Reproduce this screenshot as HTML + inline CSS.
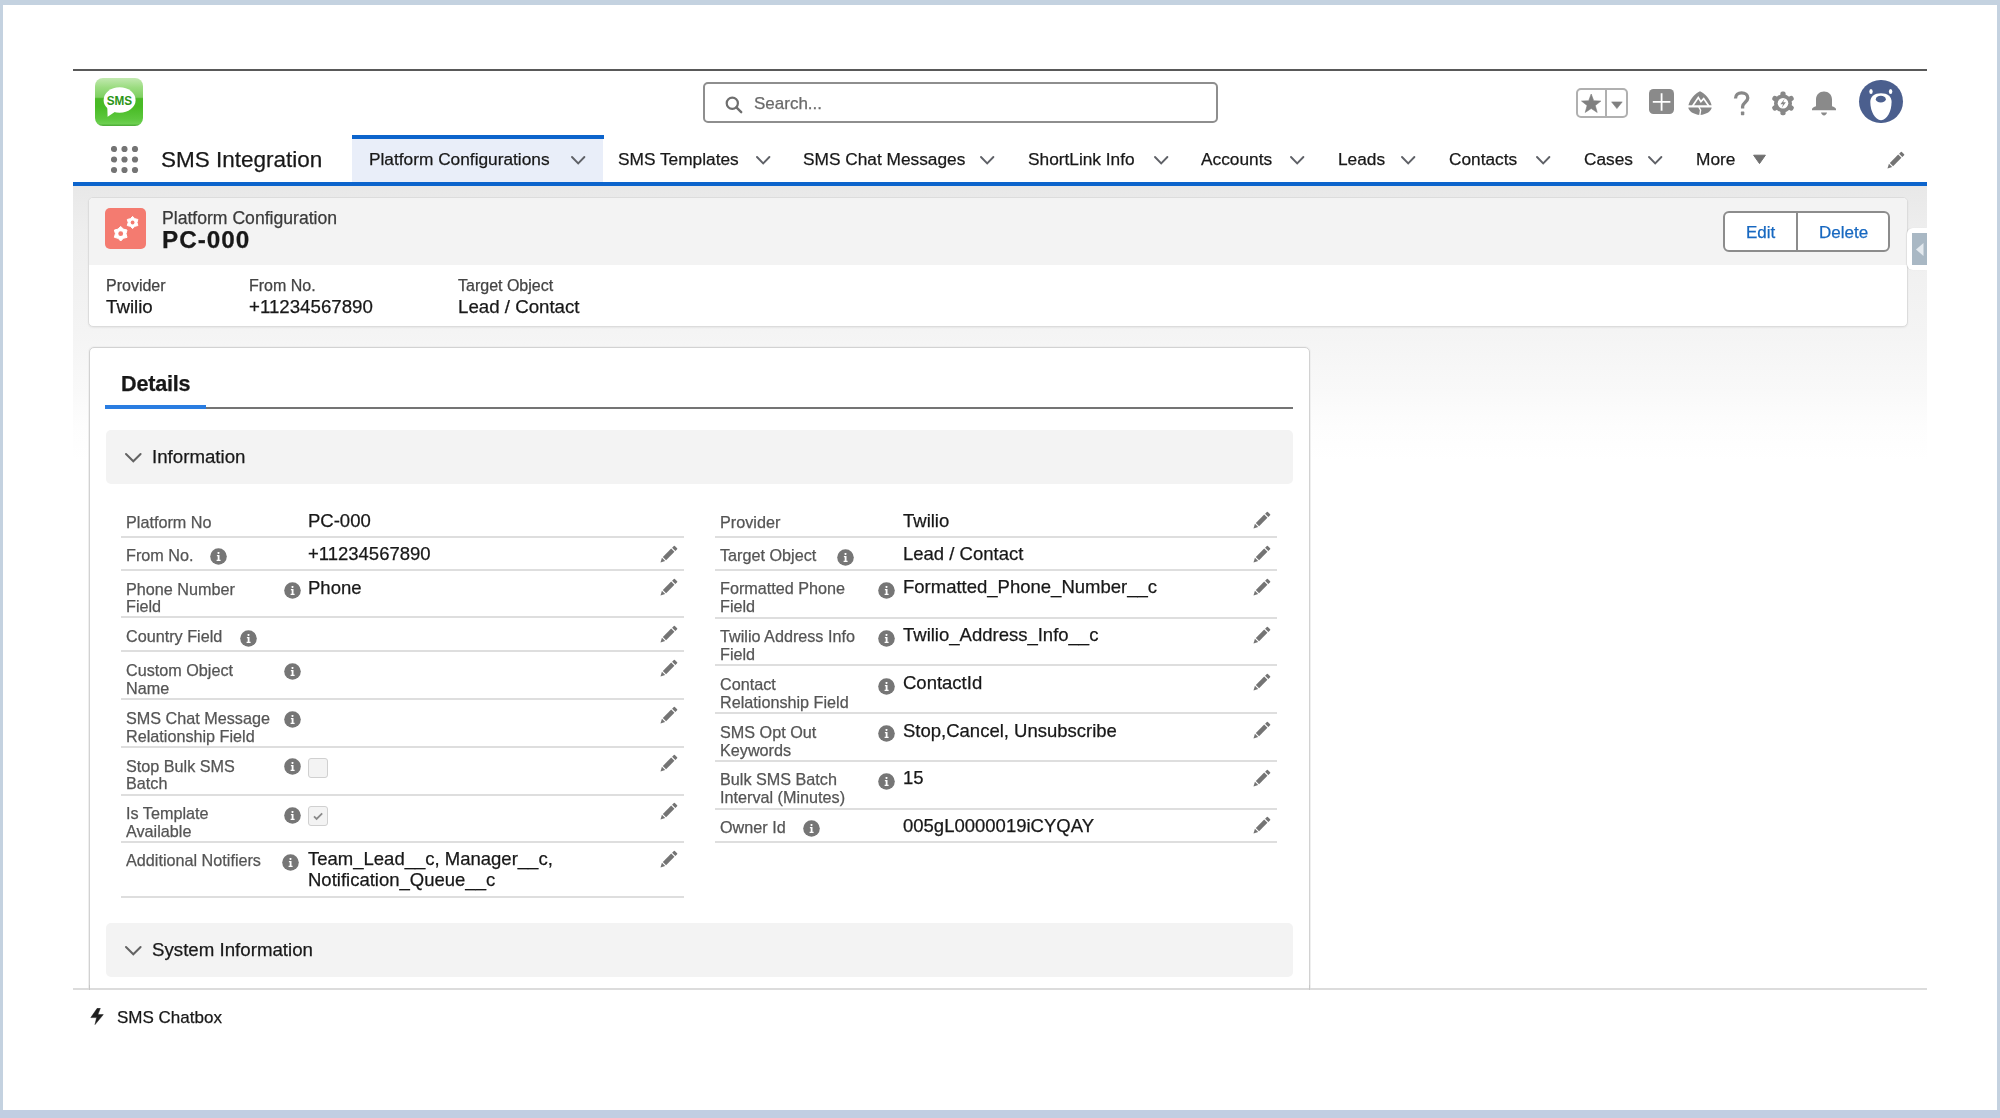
<!DOCTYPE html><html><head><meta charset="utf-8"><style>
html,body{margin:0;padding:0;}
body{width:2000px;height:1118px;position:relative;overflow:hidden;background:#c4d2e0;font-family:"Liberation Sans", sans-serif;}
.t{position:absolute;white-space:nowrap;line-height:1;-webkit-text-stroke:0.25px currentColor;will-change:transform;}
.info,.pen{position:absolute;line-height:0;}
.sep{position:absolute;height:2px;background:#dedede;}
.abs{position:absolute;box-sizing:border-box;}
</style></head><body>
<div class="abs" style="left:0;top:1110px;width:2000px;height:8px;background:#c1cee2;"></div>
<div class="abs" style="left:3px;top:5px;width:1994px;height:1105px;background:#fff;"></div>
<div class="abs" style="left:73px;top:186px;width:1854px;height:804px;background:linear-gradient(to bottom,#e8e8e8 0px,#eeeeee 45px,#f4f4f4 145px,#f9f9f9 205px,#fdfdfd 240px,#fff 275px);"></div>
<div class="abs" style="left:73px;top:69px;width:1854px;height:2px;background:#595959;"></div>
<div class="abs" style="left:73px;top:182px;width:1854px;height:4px;background:#0c64cc;"></div>

<div class="abs" style="left:95px;top:78px;width:48px;height:48px;border-radius:8px;background:linear-gradient(to bottom,#c2e9b0 0%,#9bdc80 20%,#7fd062 40%,#4ab927 43%,#48bb25 60%,#5cc73d 85%,#6ccf50 95%,#4aa836 100%);overflow:hidden;">
<svg width="48" height="48" viewBox="0 0 48 48" style="position:absolute;left:0;top:0;display:block"><ellipse cx="24.6" cy="22" rx="16" ry="12.7" fill="#fff"/><path d="M12.3 29.5L12.6 38.8L20.5 33.6z" fill="#fff"/><text x="24.4" y="26.8" text-anchor="middle" font-family="Liberation Sans" font-weight="700" font-size="12.6" textLength="25.5" lengthAdjust="spacingAndGlyphs" fill="#2b9516">SMS</text></svg></div>
<div class="abs" style="left:703px;top:82px;width:515px;height:41px;border:2px solid #8e8e8e;border-radius:5px;"></div>
<div class="abs" style="left:725px;top:96px;line-height:0"><svg width="18" height="18" viewBox="0 0 18 18"><circle cx="7.3" cy="7.3" r="5.6" fill="none" stroke="#6e6e6e" stroke-width="2.2"/><path d="M11.4 11.4L16.2 16.2" stroke="#6e6e6e" stroke-width="2.4" stroke-linecap="round"/></svg></div>
<div class="t" style="left:754.0px;top:95.2px;font-size:17px;color:#6a6a6a;font-weight:400;">Search...</div>
<div class="abs" style="left:1576px;top:88px;width:52px;height:30px;border:2px solid #b0b0b0;border-radius:5px;"></div>
<div class="abs" style="left:1605px;top:88px;width:2px;height:30px;background:#b0b0b0;"></div>
<div class="abs" style="left:1575.6px;top:87.5px;line-height:0"><svg width="53" height="31" viewBox="0 0 53 31" style="display:block"><path d="M15.20 6.00 L17.73 12.72 L24.90 13.05 L19.29 17.53 L21.20 24.45 L15.20 20.50 L9.20 24.45 L11.11 17.53 L5.50 13.05 L12.67 12.72z" fill="#808080" stroke="#808080" stroke-width="0.6" stroke-linejoin="round"/><path d="M35.6 13.9h10.6L40.9 20.6z" fill="#808080" stroke="#808080" stroke-width="0.6" stroke-linejoin="round"/></svg></div>
<div class="abs" style="left:1649.1px;top:88.6px;width:25.2px;height:25.9px;border-radius:4.5px;background:#8a8a8a;"><svg width="25.2" height="25.9" viewBox="0 0 25.2 25.9" style="position:absolute;left:0;top:0;display:block"><path d="M12.6 4.2v17.6M3.8 12.95h17.6" stroke="#fff" stroke-width="1.8"/></svg></div>
<div class="abs" style="left:1688px;top:90.5px;line-height:0"><svg width="24" height="25" viewBox="0 0 24 25" style="display:block"><path d="M12 0.3C17 2.5 22 8 23.6 14.3H0.4C2 8 7 2.5 12 0.3z" fill="#888"/><path d="M4.4 15.2L10.3 6.6L12.9 10.6L15.7 7.6L21 15.2" stroke="#fff" stroke-width="1.7" fill="none" stroke-linejoin="miter"/><path d="M0.3 16.5H23.7C23.5 20 18.5 23.5 12 24C5.5 23.5 0.5 20 0.3 16.5z" fill="#888"/><path d="M10.8 16L12.6 19.2L11.8 24.5" stroke="#fff" stroke-width="1.4" fill="none"/></svg></div>
<div class="abs" style="left:1733px;top:90.5px;line-height:0"><svg width="18" height="25" viewBox="0 0 18 25" style="display:block"><path d="M2.5 7.6C2.5 3.6 5.2 1.9 8.6 1.9C12.2 1.9 14.8 4 14.8 7C14.8 10.8 9.6 11.6 9.6 15.6V17.6" fill="none" stroke="#888" stroke-width="3.3"/><rect x="7.9" y="20.6" width="3.4" height="3.6" rx="0.6" fill="#888"/></svg></div>
<div class="abs" style="left:1771px;top:91px;line-height:0"><svg width="24" height="25" viewBox="0 0 24 25" style="display:block"><g fill="#888"><circle cx="12" cy="12.3" r="9"/><rect x="9.4" y="0.4" width="5.2" height="6" rx="2" transform="rotate(0 12 12.3)"/><rect x="9.4" y="0.4" width="5.2" height="6" rx="2" transform="rotate(60 12 12.3)"/><rect x="9.4" y="0.4" width="5.2" height="6" rx="2" transform="rotate(120 12 12.3)"/><rect x="9.4" y="0.4" width="5.2" height="6" rx="2" transform="rotate(180 12 12.3)"/><rect x="9.4" y="0.4" width="5.2" height="6" rx="2" transform="rotate(240 12 12.3)"/><rect x="9.4" y="0.4" width="5.2" height="6" rx="2" transform="rotate(300 12 12.3)"/></g><circle cx="12" cy="12.3" r="5.3" fill="#fff"/><path d="M13.6 7.8L9.4 13.3H12.1L10.6 16.9L14.9 11.3H12.2z" fill="#888"/></svg></div>
<div class="abs" style="left:1812px;top:90.5px;line-height:0"><svg width="24" height="25" viewBox="0 0 24 25" style="display:block"><path d="M4 15.3V8.5C4 3.5 7.5 0.4 12 0.4C16.5 0.4 20 3.5 20 8.5V15.3C22 15.8 24 17 24 18.2V19.2H0V18.2C0 17 2 15.8 4 15.3z" fill="#8a8a8a"/><path d="M9 21.4H15C14.5 23 13.5 24.4 12 24.4C10.5 24.4 9.5 23 9 21.4z" fill="#8a8a8a"/></svg></div>
<div class="abs" style="left:1859px;top:79.8px;width:43.5px;height:43.5px;border-radius:50%;background:#4b5f8e;overflow:hidden"><svg width="44" height="44" viewBox="0 0 44 44" style="position:absolute;left:0;top:0;display:block"><ellipse cx="12" cy="11.5" rx="1.7" ry="2.6" fill="#fff"/><ellipse cx="31.6" cy="11.5" rx="1.7" ry="2.6" fill="#fff"/><path d="M22 13.2C28.5 13.2 32.6 16.5 32.6 22C32.6 31 28 40.2 22 40.2C16 40.2 11.3 31 11.3 22C11.3 16.5 15.5 13.2 22 13.2z" fill="#fff"/><ellipse cx="21.8" cy="19.2" rx="5" ry="3.4" fill="#4b5f8e"/></svg></div>
<div class="abs" style="left:111px;top:146px;line-height:0"><svg width="28" height="28" viewBox="0 0 28 28"><circle cx="3.0" cy="3.0" r="3.1" fill="#747474"/><circle cx="3.0" cy="13.5" r="3.1" fill="#747474"/><circle cx="3.0" cy="24.0" r="3.1" fill="#747474"/><circle cx="13.5" cy="3.0" r="3.1" fill="#747474"/><circle cx="13.5" cy="13.5" r="3.1" fill="#747474"/><circle cx="13.5" cy="24.0" r="3.1" fill="#747474"/><circle cx="24.0" cy="3.0" r="3.1" fill="#747474"/><circle cx="24.0" cy="13.5" r="3.1" fill="#747474"/><circle cx="24.0" cy="24.0" r="3.1" fill="#747474"/></svg></div>
<div class="t" style="left:160.5px;top:148.9px;font-size:22.5px;color:#181818;font-weight:400;">SMS Integration</div>
<div class="abs" style="left:352px;top:135px;width:250.5px;height:47px;background:#e9eef9;"></div>
<div class="abs" style="left:352px;top:135px;width:252px;height:4px;background:#0c64cc;"></div>
<div class="t" style="left:368.5px;top:151.3px;font-size:17.3px;color:#181818;font-weight:400;">Platform Configurations</div>
<div class="abs" style="left:569.2px;top:154.2px;line-height:0"><svg width="18.4" height="12.4" viewBox="0 0 18.4 12.4" style="display:block"><path d="M3 3L9.20 9.40L15.40 3" fill="none" stroke="#5f6167" stroke-width="1.9" stroke-linecap="round" stroke-linejoin="miter"/></svg></div>
<div class="t" style="left:618.0px;top:151.3px;font-size:17.3px;color:#181818;font-weight:400;">SMS Templates</div>
<div class="abs" style="left:754.2px;top:154.2px;line-height:0"><svg width="18.4" height="12.4" viewBox="0 0 18.4 12.4" style="display:block"><path d="M3 3L9.20 9.40L15.40 3" fill="none" stroke="#5f6167" stroke-width="1.9" stroke-linecap="round" stroke-linejoin="miter"/></svg></div>
<div class="t" style="left:803.0px;top:151.3px;font-size:17.3px;color:#181818;font-weight:400;">SMS Chat Messages</div>
<div class="abs" style="left:978.2px;top:154.2px;line-height:0"><svg width="18.4" height="12.4" viewBox="0 0 18.4 12.4" style="display:block"><path d="M3 3L9.20 9.40L15.40 3" fill="none" stroke="#5f6167" stroke-width="1.9" stroke-linecap="round" stroke-linejoin="miter"/></svg></div>
<div class="t" style="left:1028.0px;top:151.3px;font-size:17.3px;color:#181818;font-weight:400;">ShortLink Info</div>
<div class="abs" style="left:1152.2px;top:154.2px;line-height:0"><svg width="18.4" height="12.4" viewBox="0 0 18.4 12.4" style="display:block"><path d="M3 3L9.20 9.40L15.40 3" fill="none" stroke="#5f6167" stroke-width="1.9" stroke-linecap="round" stroke-linejoin="miter"/></svg></div>
<div class="t" style="left:1201.0px;top:151.3px;font-size:17.3px;color:#181818;font-weight:400;">Accounts</div>
<div class="abs" style="left:1288.2px;top:154.2px;line-height:0"><svg width="18.4" height="12.4" viewBox="0 0 18.4 12.4" style="display:block"><path d="M3 3L9.20 9.40L15.40 3" fill="none" stroke="#5f6167" stroke-width="1.9" stroke-linecap="round" stroke-linejoin="miter"/></svg></div>
<div class="t" style="left:1338.0px;top:151.3px;font-size:17.3px;color:#181818;font-weight:400;">Leads</div>
<div class="abs" style="left:1399.2px;top:154.2px;line-height:0"><svg width="18.4" height="12.4" viewBox="0 0 18.4 12.4" style="display:block"><path d="M3 3L9.20 9.40L15.40 3" fill="none" stroke="#5f6167" stroke-width="1.9" stroke-linecap="round" stroke-linejoin="miter"/></svg></div>
<div class="t" style="left:1449.0px;top:151.3px;font-size:17.3px;color:#181818;font-weight:400;">Contacts</div>
<div class="abs" style="left:1534.2px;top:154.2px;line-height:0"><svg width="18.4" height="12.4" viewBox="0 0 18.4 12.4" style="display:block"><path d="M3 3L9.20 9.40L15.40 3" fill="none" stroke="#5f6167" stroke-width="1.9" stroke-linecap="round" stroke-linejoin="miter"/></svg></div>
<div class="t" style="left:1584.0px;top:151.3px;font-size:17.3px;color:#181818;font-weight:400;">Cases</div>
<div class="abs" style="left:1646.2px;top:154.2px;line-height:0"><svg width="18.4" height="12.4" viewBox="0 0 18.4 12.4" style="display:block"><path d="M3 3L9.20 9.40L15.40 3" fill="none" stroke="#5f6167" stroke-width="1.9" stroke-linecap="round" stroke-linejoin="miter"/></svg></div>
<div class="t" style="left:1696.0px;top:151.3px;font-size:17.3px;color:#181818;font-weight:400;">More</div>
<div class="abs" style="left:1752px;top:154px;line-height:0"><svg width="15" height="11" viewBox="0 0 15 11" style="display:block"><path d="M1.6 1.2h11.8L7.5 9.6z" fill="#6f6f6f" stroke="#6f6f6f" stroke-width="1" stroke-linejoin="round"/></svg></div>
<div class="pen" style="left:1887.0px;top:151.3px"><svg width="18" height="18" viewBox="0 0 18 18" style="display:block"><g transform="translate(0.5 17.5) rotate(-45)" fill="#747474"><path d="M0 0L4.3 -2.3V2.3z"/><rect x="5.6" y="-2.3" width="11.8" height="4.6"/><path d="M18.7 -2.3H21.2Q21.9 -2.3 21.9 -1.6V1.6Q21.9 2.3 21.2 2.3H18.7z"/></g></svg></div>
<div class="abs" style="left:88px;top:197px;width:1820px;height:130px;border:1px solid #dcdcdc;border-radius:5px;background:#fff;overflow:hidden;box-shadow:0 1px 2px rgba(0,0,0,0.06)"><div style="position:absolute;left:0;top:0;width:100%;height:67px;background:#f3f3f3"></div></div>
<div class="abs" style="left:105px;top:208px;width:41px;height:41px;border-radius:5px;background:#f47b70;line-height:0"><svg width="41" height="41" viewBox="0 0 41 41" style="display:block"><path d="M15.70 18.40 L18.35 21.11 L22.02 22.05 L21.00 25.70 L22.02 29.35 L18.35 30.29 L15.70 33.00 L13.05 30.29 L9.38 29.35 L10.40 25.70 L9.38 22.05 L13.05 21.11z" fill="#fff" stroke="#fff" stroke-width="1" stroke-linejoin="round"/><circle cx="15.7" cy="25.7" r="2.4" fill="#f47b70"/><path d="M27.60 8.40 L29.80 10.69 L32.88 11.45 L32.00 14.50 L32.88 17.55 L29.80 18.31 L27.60 20.60 L25.40 18.31 L22.32 17.55 L23.20 14.50 L22.32 11.45 L25.40 10.69z" fill="#fff" stroke="#fff" stroke-width="1" stroke-linejoin="round"/><circle cx="27.6" cy="14.5" r="1.9" fill="#f47b70"/></svg></div>
<div class="t" style="left:162.0px;top:209.6px;font-size:17.6px;color:#3a3a3a;font-weight:400;">Platform Configuration</div>
<div class="t" style="left:162.0px;top:228.2px;font-size:24.3px;color:#181818;font-weight:700;letter-spacing:1px;">PC-000</div>
<div class="t" style="left:105.5px;top:277.8px;font-size:16px;color:#444;font-weight:400;">Provider</div>
<div class="t" style="left:105.5px;top:297.9px;font-size:18.7px;color:#181818;font-weight:400;">Twilio</div>
<div class="t" style="left:248.5px;top:277.8px;font-size:16px;color:#444;font-weight:400;">From No.</div>
<div class="t" style="left:248.5px;top:297.9px;font-size:18.7px;color:#181818;font-weight:400;">+11234567890</div>
<div class="t" style="left:457.5px;top:277.8px;font-size:16px;color:#444;font-weight:400;">Target Object</div>
<div class="t" style="left:457.5px;top:297.9px;font-size:18.7px;color:#181818;font-weight:400;">Lead / Contact</div>
<div class="abs" style="left:1723px;top:211px;width:167px;height:41px;border:2px solid #8c8c8c;border-radius:6px;background:#fff"></div>
<div class="abs" style="left:1796px;top:211px;width:2px;height:41px;background:#8c8c8c"></div>
<div class="t" style="left:1745.5px;top:224.1px;font-size:17px;color:#1768c0;font-weight:400;">Edit</div>
<div class="t" style="left:1818.5px;top:224.1px;font-size:17px;color:#1768c0;font-weight:400;">Delete</div>
<div class="abs" style="left:1907px;top:228px;width:20px;height:42px;background:#fff;border-radius:6px 0 0 6px;box-shadow:-1px 0 1px rgba(0,0,0,0.08)"></div>
<div class="abs" style="left:1912px;top:233px;width:15px;height:32px;background:#a9b8c4;"><svg width="15" height="32" viewBox="0 0 15 32" style="position:absolute;left:0;top:0"><path d="M4 16.5l7.5-6.5v13z" fill="#e3e9ee"/></svg></div>
<div class="abs" style="left:89px;top:347px;width:1221px;height:702px;border:1px solid #d2d2d2;border-radius:5px;background:#fff;box-shadow:0 0 0 1px #efefef"></div>
<div class="t" style="left:121.0px;top:373.4px;font-size:21.6px;color:#181818;font-weight:700;letter-spacing:-0.2px;">Details</div>
<div class="abs" style="left:105px;top:407px;width:1188px;height:2px;background:#747474"></div>
<div class="abs" style="left:105px;top:405px;width:101px;height:4px;background:#2a7de1"></div>
<div class="abs" style="left:106px;top:430px;width:1187px;height:54px;border-radius:5px;background:#f3f3f3"></div>
<div class="abs" style="left:123.2px;top:451.2px;line-height:0"><svg width="20.6" height="13.3" viewBox="0 0 20.6 13.3" style="display:block"><path d="M3 3L10.30 10.30L17.60 3" fill="none" stroke="#636363" stroke-width="2.0" stroke-linecap="round" stroke-linejoin="miter"/></svg></div>
<div class="t" style="left:151.5px;top:448.1px;font-size:18.7px;color:#181818;font-weight:400;">Information</div>
<div class="sep" style="left:121px;top:536.0px;width:563px"></div>
<div class="sep" style="left:121px;top:569.0px;width:563px"></div>
<div class="sep" style="left:121px;top:616.0px;width:563px"></div>
<div class="sep" style="left:121px;top:650.0px;width:563px"></div>
<div class="sep" style="left:121px;top:698.0px;width:563px"></div>
<div class="sep" style="left:121px;top:746.0px;width:563px"></div>
<div class="sep" style="left:121px;top:794.0px;width:563px"></div>
<div class="sep" style="left:121px;top:841.0px;width:563px"></div>
<div class="sep" style="left:121px;top:896.0px;width:563px"></div>
<div class="sep" style="left:715px;top:536.0px;width:562px"></div>
<div class="sep" style="left:715px;top:569.0px;width:562px"></div>
<div class="sep" style="left:715px;top:617.0px;width:562px"></div>
<div class="sep" style="left:715px;top:664.0px;width:562px"></div>
<div class="sep" style="left:715px;top:712.0px;width:562px"></div>
<div class="sep" style="left:715px;top:760.0px;width:562px"></div>
<div class="sep" style="left:715px;top:808.0px;width:562px"></div>
<div class="sep" style="left:715px;top:841.0px;width:562px"></div>
<div class="t" style="left:126.0px;top:514.2px;font-size:16.2px;color:#555555;font-weight:400;">Platform No</div>
<div class="t" style="left:308.0px;top:512.2px;font-size:18.5px;color:#181818;font-weight:400;">PC-000</div>
<div class="t" style="left:126.0px;top:547.3px;font-size:16.2px;color:#555555;font-weight:400;">From No.</div>
<div class="t" style="left:308.0px;top:545.3px;font-size:18.5px;color:#181818;font-weight:400;">+11234567890</div>
<div class="info" style="left:209.5px;top:548.4px"><svg width="17" height="17" viewBox="0 0 17 17" style="display:block"><circle cx="8.5" cy="8.5" r="8.3" fill="#767676"/><rect x="7.4" y="3.9" width="2.2" height="2" rx="0.8" fill="#fff"/><path d="M6.9 7.1h2.6v4.6h1.1v1.3H6.6v-1.3h1.1V8.3h-0.8z" fill="#fff"/></svg></div>
<div class="pen" style="left:659.5px;top:544.5px"><svg width="18" height="18" viewBox="0 0 18 18" style="display:block"><g transform="translate(0.5 17.5) rotate(-45)" fill="#747474"><path d="M0 0L4.3 -2.3V2.3z"/><rect x="5.6" y="-2.3" width="11.8" height="4.6"/><path d="M18.7 -2.3H21.2Q21.9 -2.3 21.9 -1.6V1.6Q21.9 2.3 21.2 2.3H18.7z"/></g></svg></div>
<div class="t" style="left:126.0px;top:580.6px;font-size:16.2px;color:#555555;font-weight:400;">Phone Number</div>
<div class="t" style="left:126.0px;top:598.4px;font-size:16.2px;color:#555555;font-weight:400;">Field</div>
<div class="t" style="left:308.0px;top:578.6px;font-size:18.5px;color:#181818;font-weight:400;">Phone</div>
<div class="info" style="left:284.1px;top:582.0px"><svg width="17" height="17" viewBox="0 0 17 17" style="display:block"><circle cx="8.5" cy="8.5" r="8.3" fill="#767676"/><rect x="7.4" y="3.9" width="2.2" height="2" rx="0.8" fill="#fff"/><path d="M6.9 7.1h2.6v4.6h1.1v1.3H6.6v-1.3h1.1V8.3h-0.8z" fill="#fff"/></svg></div>
<div class="pen" style="left:659.5px;top:577.7px"><svg width="18" height="18" viewBox="0 0 18 18" style="display:block"><g transform="translate(0.5 17.5) rotate(-45)" fill="#747474"><path d="M0 0L4.3 -2.3V2.3z"/><rect x="5.6" y="-2.3" width="11.8" height="4.6"/><path d="M18.7 -2.3H21.2Q21.9 -2.3 21.9 -1.6V1.6Q21.9 2.3 21.2 2.3H18.7z"/></g></svg></div>
<div class="t" style="left:126.0px;top:628.4px;font-size:16.2px;color:#555555;font-weight:400;">Country Field</div>
<div class="info" style="left:240.4px;top:630.0px"><svg width="17" height="17" viewBox="0 0 17 17" style="display:block"><circle cx="8.5" cy="8.5" r="8.3" fill="#767676"/><rect x="7.4" y="3.9" width="2.2" height="2" rx="0.8" fill="#fff"/><path d="M6.9 7.1h2.6v4.6h1.1v1.3H6.6v-1.3h1.1V8.3h-0.8z" fill="#fff"/></svg></div>
<div class="pen" style="left:659.5px;top:625.2px"><svg width="18" height="18" viewBox="0 0 18 18" style="display:block"><g transform="translate(0.5 17.5) rotate(-45)" fill="#747474"><path d="M0 0L4.3 -2.3V2.3z"/><rect x="5.6" y="-2.3" width="11.8" height="4.6"/><path d="M18.7 -2.3H21.2Q21.9 -2.3 21.9 -1.6V1.6Q21.9 2.3 21.2 2.3H18.7z"/></g></svg></div>
<div class="t" style="left:126.0px;top:661.8px;font-size:16.2px;color:#555555;font-weight:400;">Custom Object</div>
<div class="t" style="left:126.0px;top:679.6px;font-size:16.2px;color:#555555;font-weight:400;">Name</div>
<div class="info" style="left:284.1px;top:663.4px"><svg width="17" height="17" viewBox="0 0 17 17" style="display:block"><circle cx="8.5" cy="8.5" r="8.3" fill="#767676"/><rect x="7.4" y="3.9" width="2.2" height="2" rx="0.8" fill="#fff"/><path d="M6.9 7.1h2.6v4.6h1.1v1.3H6.6v-1.3h1.1V8.3h-0.8z" fill="#fff"/></svg></div>
<div class="pen" style="left:659.5px;top:658.8px"><svg width="18" height="18" viewBox="0 0 18 18" style="display:block"><g transform="translate(0.5 17.5) rotate(-45)" fill="#747474"><path d="M0 0L4.3 -2.3V2.3z"/><rect x="5.6" y="-2.3" width="11.8" height="4.6"/><path d="M18.7 -2.3H21.2Q21.9 -2.3 21.9 -1.6V1.6Q21.9 2.3 21.2 2.3H18.7z"/></g></svg></div>
<div class="t" style="left:126.0px;top:709.8px;font-size:16.2px;color:#555555;font-weight:400;">SMS Chat Message</div>
<div class="t" style="left:126.0px;top:727.6px;font-size:16.2px;color:#555555;font-weight:400;">Relationship Field</div>
<div class="info" style="left:284.1px;top:710.6px"><svg width="17" height="17" viewBox="0 0 17 17" style="display:block"><circle cx="8.5" cy="8.5" r="8.3" fill="#767676"/><rect x="7.4" y="3.9" width="2.2" height="2" rx="0.8" fill="#fff"/><path d="M6.9 7.1h2.6v4.6h1.1v1.3H6.6v-1.3h1.1V8.3h-0.8z" fill="#fff"/></svg></div>
<div class="pen" style="left:659.5px;top:706.3px"><svg width="18" height="18" viewBox="0 0 18 18" style="display:block"><g transform="translate(0.5 17.5) rotate(-45)" fill="#747474"><path d="M0 0L4.3 -2.3V2.3z"/><rect x="5.6" y="-2.3" width="11.8" height="4.6"/><path d="M18.7 -2.3H21.2Q21.9 -2.3 21.9 -1.6V1.6Q21.9 2.3 21.2 2.3H18.7z"/></g></svg></div>
<div class="t" style="left:126.0px;top:757.6px;font-size:16.2px;color:#555555;font-weight:400;">Stop Bulk SMS</div>
<div class="t" style="left:126.0px;top:775.4px;font-size:16.2px;color:#555555;font-weight:400;">Batch</div>
<div class="info" style="left:284.1px;top:758.4px"><svg width="17" height="17" viewBox="0 0 17 17" style="display:block"><circle cx="8.5" cy="8.5" r="8.3" fill="#767676"/><rect x="7.4" y="3.9" width="2.2" height="2" rx="0.8" fill="#fff"/><path d="M6.9 7.1h2.6v4.6h1.1v1.3H6.6v-1.3h1.1V8.3h-0.8z" fill="#fff"/></svg></div>
<div class="pen" style="left:659.5px;top:754.4px"><svg width="18" height="18" viewBox="0 0 18 18" style="display:block"><g transform="translate(0.5 17.5) rotate(-45)" fill="#747474"><path d="M0 0L4.3 -2.3V2.3z"/><rect x="5.6" y="-2.3" width="11.8" height="4.6"/><path d="M18.7 -2.3H21.2Q21.9 -2.3 21.9 -1.6V1.6Q21.9 2.3 21.2 2.3H18.7z"/></g></svg></div>
<div class="t" style="left:126.0px;top:805.1px;font-size:16.2px;color:#555555;font-weight:400;">Is Template</div>
<div class="t" style="left:126.0px;top:822.9px;font-size:16.2px;color:#555555;font-weight:400;">Available</div>
<div class="info" style="left:284.1px;top:806.5px"><svg width="17" height="17" viewBox="0 0 17 17" style="display:block"><circle cx="8.5" cy="8.5" r="8.3" fill="#767676"/><rect x="7.4" y="3.9" width="2.2" height="2" rx="0.8" fill="#fff"/><path d="M6.9 7.1h2.6v4.6h1.1v1.3H6.6v-1.3h1.1V8.3h-0.8z" fill="#fff"/></svg></div>
<div class="pen" style="left:659.5px;top:802.2px"><svg width="18" height="18" viewBox="0 0 18 18" style="display:block"><g transform="translate(0.5 17.5) rotate(-45)" fill="#747474"><path d="M0 0L4.3 -2.3V2.3z"/><rect x="5.6" y="-2.3" width="11.8" height="4.6"/><path d="M18.7 -2.3H21.2Q21.9 -2.3 21.9 -1.6V1.6Q21.9 2.3 21.2 2.3H18.7z"/></g></svg></div>
<div class="t" style="left:126.0px;top:852.3px;font-size:16.2px;color:#555555;font-weight:400;">Additional Notifiers</div>
<div class="t" style="left:308.0px;top:850.3px;font-size:18.5px;color:#181818;font-weight:400;">Team_Lead__c, Manager__c,</div>
<div class="t" style="left:308.0px;top:871.3px;font-size:18.5px;color:#181818;font-weight:400;">Notification_Queue__c</div>
<div class="info" style="left:282.3px;top:853.7px"><svg width="17" height="17" viewBox="0 0 17 17" style="display:block"><circle cx="8.5" cy="8.5" r="8.3" fill="#767676"/><rect x="7.4" y="3.9" width="2.2" height="2" rx="0.8" fill="#fff"/><path d="M6.9 7.1h2.6v4.6h1.1v1.3H6.6v-1.3h1.1V8.3h-0.8z" fill="#fff"/></svg></div>
<div class="pen" style="left:659.5px;top:850.0px"><svg width="18" height="18" viewBox="0 0 18 18" style="display:block"><g transform="translate(0.5 17.5) rotate(-45)" fill="#747474"><path d="M0 0L4.3 -2.3V2.3z"/><rect x="5.6" y="-2.3" width="11.8" height="4.6"/><path d="M18.7 -2.3H21.2Q21.9 -2.3 21.9 -1.6V1.6Q21.9 2.3 21.2 2.3H18.7z"/></g></svg></div>
<div class="abs" style="left:308px;top:758px;width:20px;height:20px;border:1px solid #d0d0d0;border-radius:3px;background:#f3f3f3"></div>
<div class="abs" style="left:308px;top:806px;width:20px;height:20px;border:1px solid #d0d0d0;border-radius:3px;background:#f3f3f3;line-height:0"><svg width="18" height="18" viewBox="0 0 18 18"><path d="M5 9.3l2.6 2.6L13.2 6.4" fill="none" stroke="#8a8a8a" stroke-width="1.8"/></svg></div>
<div class="t" style="left:720.0px;top:513.8px;font-size:16.2px;color:#555555;font-weight:400;">Provider</div>
<div class="t" style="left:902.5px;top:511.8px;font-size:18.5px;color:#181818;font-weight:400;">Twilio</div>
<div class="pen" style="left:1253.0px;top:511.0px"><svg width="18" height="18" viewBox="0 0 18 18" style="display:block"><g transform="translate(0.5 17.5) rotate(-45)" fill="#747474"><path d="M0 0L4.3 -2.3V2.3z"/><rect x="5.6" y="-2.3" width="11.8" height="4.6"/><path d="M18.7 -2.3H21.2Q21.9 -2.3 21.9 -1.6V1.6Q21.9 2.3 21.2 2.3H18.7z"/></g></svg></div>
<div class="t" style="left:720.0px;top:546.8px;font-size:16.2px;color:#555555;font-weight:400;">Target Object</div>
<div class="t" style="left:902.5px;top:544.8px;font-size:18.5px;color:#181818;font-weight:400;">Lead / Contact</div>
<div class="info" style="left:836.8px;top:548.5px"><svg width="17" height="17" viewBox="0 0 17 17" style="display:block"><circle cx="8.5" cy="8.5" r="8.3" fill="#767676"/><rect x="7.4" y="3.9" width="2.2" height="2" rx="0.8" fill="#fff"/><path d="M6.9 7.1h2.6v4.6h1.1v1.3H6.6v-1.3h1.1V8.3h-0.8z" fill="#fff"/></svg></div>
<div class="pen" style="left:1253.0px;top:544.5px"><svg width="18" height="18" viewBox="0 0 18 18" style="display:block"><g transform="translate(0.5 17.5) rotate(-45)" fill="#747474"><path d="M0 0L4.3 -2.3V2.3z"/><rect x="5.6" y="-2.3" width="11.8" height="4.6"/><path d="M18.7 -2.3H21.2Q21.9 -2.3 21.9 -1.6V1.6Q21.9 2.3 21.2 2.3H18.7z"/></g></svg></div>
<div class="t" style="left:720.0px;top:580.2px;font-size:16.2px;color:#555555;font-weight:400;">Formatted Phone</div>
<div class="t" style="left:720.0px;top:598.0px;font-size:16.2px;color:#555555;font-weight:400;">Field</div>
<div class="t" style="left:902.5px;top:578.2px;font-size:18.5px;color:#181818;font-weight:400;">Formatted_Phone_Number__c</div>
<div class="info" style="left:878.4px;top:582.0px"><svg width="17" height="17" viewBox="0 0 17 17" style="display:block"><circle cx="8.5" cy="8.5" r="8.3" fill="#767676"/><rect x="7.4" y="3.9" width="2.2" height="2" rx="0.8" fill="#fff"/><path d="M6.9 7.1h2.6v4.6h1.1v1.3H6.6v-1.3h1.1V8.3h-0.8z" fill="#fff"/></svg></div>
<div class="pen" style="left:1253.0px;top:577.5px"><svg width="18" height="18" viewBox="0 0 18 18" style="display:block"><g transform="translate(0.5 17.5) rotate(-45)" fill="#747474"><path d="M0 0L4.3 -2.3V2.3z"/><rect x="5.6" y="-2.3" width="11.8" height="4.6"/><path d="M18.7 -2.3H21.2Q21.9 -2.3 21.9 -1.6V1.6Q21.9 2.3 21.2 2.3H18.7z"/></g></svg></div>
<div class="t" style="left:720.0px;top:627.8px;font-size:16.2px;color:#555555;font-weight:400;">Twilio Address Info</div>
<div class="t" style="left:720.0px;top:645.6px;font-size:16.2px;color:#555555;font-weight:400;">Field</div>
<div class="t" style="left:902.5px;top:625.8px;font-size:18.5px;color:#181818;font-weight:400;">Twilio_Address_Info__c</div>
<div class="info" style="left:878.4px;top:629.5px"><svg width="17" height="17" viewBox="0 0 17 17" style="display:block"><circle cx="8.5" cy="8.5" r="8.3" fill="#767676"/><rect x="7.4" y="3.9" width="2.2" height="2" rx="0.8" fill="#fff"/><path d="M6.9 7.1h2.6v4.6h1.1v1.3H6.6v-1.3h1.1V8.3h-0.8z" fill="#fff"/></svg></div>
<div class="pen" style="left:1253.0px;top:625.5px"><svg width="18" height="18" viewBox="0 0 18 18" style="display:block"><g transform="translate(0.5 17.5) rotate(-45)" fill="#747474"><path d="M0 0L4.3 -2.3V2.3z"/><rect x="5.6" y="-2.3" width="11.8" height="4.6"/><path d="M18.7 -2.3H21.2Q21.9 -2.3 21.9 -1.6V1.6Q21.9 2.3 21.2 2.3H18.7z"/></g></svg></div>
<div class="t" style="left:720.0px;top:675.8px;font-size:16.2px;color:#555555;font-weight:400;">Contact</div>
<div class="t" style="left:720.0px;top:693.6px;font-size:16.2px;color:#555555;font-weight:400;">Relationship Field</div>
<div class="t" style="left:902.5px;top:673.8px;font-size:18.5px;color:#181818;font-weight:400;">ContactId</div>
<div class="info" style="left:878.4px;top:677.5px"><svg width="17" height="17" viewBox="0 0 17 17" style="display:block"><circle cx="8.5" cy="8.5" r="8.3" fill="#767676"/><rect x="7.4" y="3.9" width="2.2" height="2" rx="0.8" fill="#fff"/><path d="M6.9 7.1h2.6v4.6h1.1v1.3H6.6v-1.3h1.1V8.3h-0.8z" fill="#fff"/></svg></div>
<div class="pen" style="left:1253.0px;top:672.9px"><svg width="18" height="18" viewBox="0 0 18 18" style="display:block"><g transform="translate(0.5 17.5) rotate(-45)" fill="#747474"><path d="M0 0L4.3 -2.3V2.3z"/><rect x="5.6" y="-2.3" width="11.8" height="4.6"/><path d="M18.7 -2.3H21.2Q21.9 -2.3 21.9 -1.6V1.6Q21.9 2.3 21.2 2.3H18.7z"/></g></svg></div>
<div class="t" style="left:720.0px;top:723.8px;font-size:16.2px;color:#555555;font-weight:400;">SMS Opt Out</div>
<div class="t" style="left:720.0px;top:741.6px;font-size:16.2px;color:#555555;font-weight:400;">Keywords</div>
<div class="t" style="left:902.5px;top:721.8px;font-size:18.5px;color:#181818;font-weight:400;">Stop,Cancel, Unsubscribe</div>
<div class="info" style="left:878.4px;top:725.0px"><svg width="17" height="17" viewBox="0 0 17 17" style="display:block"><circle cx="8.5" cy="8.5" r="8.3" fill="#767676"/><rect x="7.4" y="3.9" width="2.2" height="2" rx="0.8" fill="#fff"/><path d="M6.9 7.1h2.6v4.6h1.1v1.3H6.6v-1.3h1.1V8.3h-0.8z" fill="#fff"/></svg></div>
<div class="pen" style="left:1253.0px;top:720.9px"><svg width="18" height="18" viewBox="0 0 18 18" style="display:block"><g transform="translate(0.5 17.5) rotate(-45)" fill="#747474"><path d="M0 0L4.3 -2.3V2.3z"/><rect x="5.6" y="-2.3" width="11.8" height="4.6"/><path d="M18.7 -2.3H21.2Q21.9 -2.3 21.9 -1.6V1.6Q21.9 2.3 21.2 2.3H18.7z"/></g></svg></div>
<div class="t" style="left:720.0px;top:771.3px;font-size:16.2px;color:#555555;font-weight:400;">Bulk SMS Batch</div>
<div class="t" style="left:720.0px;top:789.1px;font-size:16.2px;color:#555555;font-weight:400;">Interval (Minutes)</div>
<div class="t" style="left:902.5px;top:769.3px;font-size:18.5px;color:#181818;font-weight:400;">15</div>
<div class="info" style="left:878.4px;top:773.0px"><svg width="17" height="17" viewBox="0 0 17 17" style="display:block"><circle cx="8.5" cy="8.5" r="8.3" fill="#767676"/><rect x="7.4" y="3.9" width="2.2" height="2" rx="0.8" fill="#fff"/><path d="M6.9 7.1h2.6v4.6h1.1v1.3H6.6v-1.3h1.1V8.3h-0.8z" fill="#fff"/></svg></div>
<div class="pen" style="left:1253.0px;top:768.5px"><svg width="18" height="18" viewBox="0 0 18 18" style="display:block"><g transform="translate(0.5 17.5) rotate(-45)" fill="#747474"><path d="M0 0L4.3 -2.3V2.3z"/><rect x="5.6" y="-2.3" width="11.8" height="4.6"/><path d="M18.7 -2.3H21.2Q21.9 -2.3 21.9 -1.6V1.6Q21.9 2.3 21.2 2.3H18.7z"/></g></svg></div>
<div class="t" style="left:720.0px;top:818.8px;font-size:16.2px;color:#555555;font-weight:400;">Owner Id</div>
<div class="t" style="left:902.5px;top:816.8px;font-size:18.5px;color:#181818;font-weight:400;">005gL0000019iCYQAY</div>
<div class="info" style="left:802.8px;top:820.0px"><svg width="17" height="17" viewBox="0 0 17 17" style="display:block"><circle cx="8.5" cy="8.5" r="8.3" fill="#767676"/><rect x="7.4" y="3.9" width="2.2" height="2" rx="0.8" fill="#fff"/><path d="M6.9 7.1h2.6v4.6h1.1v1.3H6.6v-1.3h1.1V8.3h-0.8z" fill="#fff"/></svg></div>
<div class="pen" style="left:1253.0px;top:816.0px"><svg width="18" height="18" viewBox="0 0 18 18" style="display:block"><g transform="translate(0.5 17.5) rotate(-45)" fill="#747474"><path d="M0 0L4.3 -2.3V2.3z"/><rect x="5.6" y="-2.3" width="11.8" height="4.6"/><path d="M18.7 -2.3H21.2Q21.9 -2.3 21.9 -1.6V1.6Q21.9 2.3 21.2 2.3H18.7z"/></g></svg></div>
<div class="abs" style="left:106px;top:922.5px;width:1187px;height:54px;border-radius:5px;background:#f3f3f3"></div>
<div class="abs" style="left:123.2px;top:943.9px;line-height:0"><svg width="20.6" height="13.3" viewBox="0 0 20.6 13.3" style="display:block"><path d="M3 3L10.30 10.30L17.60 3" fill="none" stroke="#636363" stroke-width="2.0" stroke-linecap="round" stroke-linejoin="miter"/></svg></div>
<div class="t" style="left:151.5px;top:940.9px;font-size:18.7px;color:#181818;font-weight:400;">System Information</div>
<div class="abs" style="left:73px;top:989px;width:1854px;height:121px;background:#fff"></div>
<div class="abs" style="left:73px;top:988px;width:1854px;height:2px;background:#dcdcdc"></div>
<div class="abs" style="left:89px;top:985px;width:1px;height:5px;background:#c8c8c8"></div>
<div class="abs" style="left:1309px;top:985px;width:1px;height:5px;background:#c8c8c8"></div>
<div class="abs" style="left:90px;top:1008px;line-height:0"><svg width="14" height="17" viewBox="0 0 14 17" style="display:block"><path d="M7.2 0.3H10.3L7.9 6.6H13.3L5 16.6L6.6 9.6H0.8z" fill="#1e1e1e" stroke="#1e1e1e" stroke-width="0.5" stroke-linejoin="round"/></svg></div>
<div class="t" style="left:117.0px;top:1008.8px;font-size:17px;color:#181818;font-weight:400;">SMS Chatbox</div>
</body></html>
